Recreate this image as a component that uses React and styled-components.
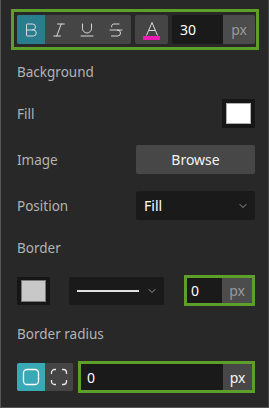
import React from 'react';
import styled, { createGlobalStyle } from 'styled-components';
import { Bold, Italic, Underline, Strikethrough, ChevronDown } from 'lucide-react';

const GlobalStyle = createGlobalStyle`
  html, body { margin: 0; padding: 0; background: #282828; }
  * { box-sizing: border-box; }
`;

const Panel = styled.div`
  width: 269px;
  height: 408px;
  background: #282828;
  border-left: 1px solid #555;
  border-right: 1px solid #444;
  border-bottom: 1px solid #555;
  padding: 9px 13px 0 16px;
  display: flex;
  flex-direction: column;
  font-family: "Noto Sans", "Open Sans", sans-serif;
  font-size: 13.5px;
  color: #b3b3b3;
`;

const Toolbar = styled.div`
  display: flex;
  gap: 4px;
  width: 248px;
  height: 41px;
  margin-left: -6px;
  padding: 3px 1px 3px 3px;
  border: 3px solid #5e9f2c;
`;

const ButtonGroup = styled.div`
  display: flex;
  background: #454545;
  border-radius: 2px;
  overflow: hidden;
`;

const IconButton = styled.div`
  width: ${p => p.$w || 28}px;
  height: ${p => p.$h || 29}px;
  display: flex;
  align-items: center;
  justify-content: center;
  color: #e6e6e6;
  background: ${p => p.$active || 'transparent'};
`;

const ColorButton = styled.div`
  width: 33px;
  background: #454545;
  border-radius: 2px;
  display: flex;
  flex-direction: column;
  align-items: center;
  justify-content: center;
  color: #d8d8d8;
  font-size: 0;
`;

const ColorBar = styled.div`
  width: 17px;
  height: 4px;
  background: #ec1cb4;
  margin-top: -2px;
`;

const NumberField = styled.div`
  display: flex;
  width: ${p => p.$w}px;
  height: ${p => p.$h || 29}px;
  border-radius: 2px;
  overflow: hidden;
`;

const NumberValue = styled.div`
  flex: 1;
  background: #1a1a1a;
  color: #fff;
  font-size: 14px;
  display: flex;
  align-items: center;
  padding-left: ${p => p.$pad || 8}px;
`;

const Unit = styled.div`
  width: ${p => p.$w}px;
  background: ${p => (p.$bright ? '#474747' : '#4c4c4c')};
  color: ${p => (p.$bright ? '#f5f5f5' : '#9a9a9a')};
  font-size: 14px;
  display: flex;
  align-items: center;
  justify-content: center;
`;

const Highlight = styled.div`
  border: 3px solid #5e9f2c;
  display: flex;
`;

const Label = styled.div`
  height: 20px;
  line-height: 20px;
  margin-top: ${p => p.$top || 18}px;
`;

const Row = styled.div`
  display: flex;
  align-items: center;
  justify-content: space-between;
  height: ${p => p.$h || 29}px;
  margin-top: ${p => p.$top || 17}px;
`;

const Swatch = styled.div`
  width: 33px;
  height: ${p => p.$h || 29}px;
  background: #161616;
  padding: ${p => (p.$h ? '3px 4px' : '4px')};
  div {
    width: 100%;
    height: 100%;
    background: ${p => p.$color};
    border: 1px solid ${p => p.$edge};
  }
`;

const ActionButton = styled.div`
  width: 119px;
  height: 29px;
  background: #474747;
  border-radius: 2px;
  color: #f2f2f2;
  font-size: 14px;
  display: flex;
  align-items: center;
  justify-content: center;
`;

const Select = styled.div`
  width: ${p => p.$w || 119}px;
  height: ${p => p.$h || 29}px;
  background: #1a1a1a;
  border-radius: 2px;
  color: #fff;
  font-size: 14px;
  display: flex;
  align-items: center;
  justify-content: space-between;
  padding: 0 6px 0 8px;
`;

const LineSample = styled.div`
  width: 62px;
  height: 2px;
  background: #e0e0e0;
`;

const Toggle = styled.div`
  width: ${p => p.$w}px;
  height: 28px;
  display: flex;
  align-items: center;
  justify-content: center;
  background: ${p => (p.$active ? '#3aa9b6' : '#454545')};
`;

const BorderControls = styled.div`
  display: flex;
  align-items: center;
  gap: 19px;
`;

const RadiusRow = styled(Row)`
  justify-content: flex-start;
  gap: 5px;
`;

const Chevron = () => <ChevronDown size={12} color="#bdbdbd" strokeWidth={1.5} />;

const LetterA = () => (
  <svg width="18" height="18" viewBox="0 0 18 18" fill="none" stroke="#d8d8d8" strokeWidth="1">
    <path d="M3.5 15.5 L9 2.5 L14.5 15.5 M5.6 10.5 H12.4" />
  </svg>
);

const RoundedSquare = () => (
  <svg width="18" height="18" viewBox="0 0 18 18" fill="none" stroke="#fff" strokeWidth="1.3">
    <rect x="1.5" y="1.5" width="15" height="15" rx="3.5" />
  </svg>
);

const Corners = () => (
  <svg width="18" height="18" viewBox="0 0 18 18" fill="none" stroke="#e6e6e6" strokeWidth="1.3">
    <path d="M1.5 6 V4.5 A3 3 0 0 1 4.5 1.5 H6" />
    <path d="M12 1.5 H13.5 A3 3 0 0 1 16.5 4.5 V6" />
    <path d="M16.5 12 V13.5 A3 3 0 0 1 13.5 16.5 H12" />
    <path d="M6 16.5 H4.5 A3 3 0 0 1 1.5 13.5 V12" />
  </svg>
);

export default function App() {
  const icon = { size: 18, strokeWidth: 1.2 };
  return (
    <>
      <GlobalStyle />
      <Panel>
        <Toolbar>
          <ButtonGroup>
            <IconButton $active="#2a7d8c"><Bold {...icon} /></IconButton>
            <IconButton><Italic {...icon} /></IconButton>
            <IconButton><Underline {...icon} /></IconButton>
            <IconButton $w={30}><Strikethrough {...icon} /></IconButton>
          </ButtonGroup>
          <ColorButton>
            <LetterA />
            <ColorBar />
          </ColorButton>
          <NumberField $w={83}>
            <NumberValue>30</NumberValue>
            <Unit $w={32}>px</Unit>
          </NumberField>
        </Toolbar>

        <Label $top={12}>Background</Label>

        <Row>
          <span>Fill</span>
          <Swatch $color="#fff" $edge="#b0b0b0"><div /></Swatch>
        </Row>

        <Row>
          <span>Image</span>
          <ActionButton>Browse</ActionButton>
        </Row>

        <Row>
          <span>Position</span>
          <Select>
            <span>Fill</span>
            <Chevron />
          </Select>
        </Row>

        <Label>Border</Label>

        <Row $h={31}>
          <BorderControls>
            <Swatch $h={28} $color="#c8c8c8" $edge="#7a7a7a"><div /></Swatch>
            <Select $w={95} $h={28}>
              <LineSample />
              <Chevron />
            </Select>
          </BorderControls>
          <Highlight>
            <NumberField $w={65} $h={25}>
              <NumberValue $pad={4}>0</NumberValue>
              <Unit $w={30}>px</Unit>
            </NumberField>
          </Highlight>
        </Row>

        <Label>Border radius</Label>

        <RadiusRow $h={32}>
          <ButtonGroup>
            <Toggle $w={28} $active><RoundedSquare /></Toggle>
            <Toggle $w={29}><Corners /></Toggle>
          </ButtonGroup>
          <Highlight>
            <NumberField $w={171} $h={26}>
              <NumberValue $pad={6}>0</NumberValue>
              <Unit $w={29} $bright>px</Unit>
            </NumberField>
          </Highlight>
        </RadiusRow>
      </Panel>
    </>
  );
}
